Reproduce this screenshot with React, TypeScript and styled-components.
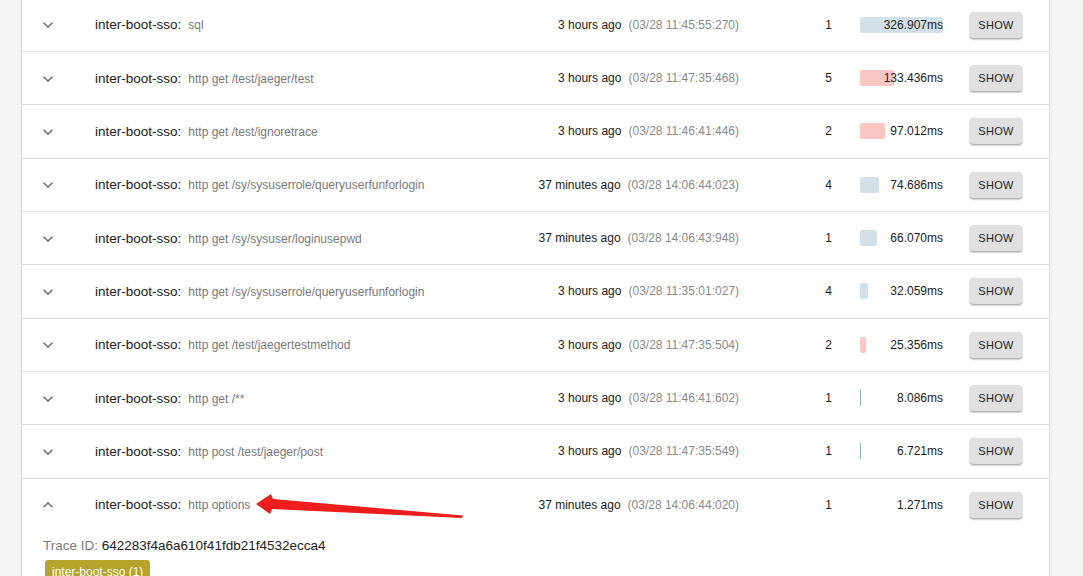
import React from "react";
import styled, { createGlobalStyle } from "styled-components";

const Global = createGlobalStyle`
  html, body { margin: 0; padding: 0; background: #f5f5f5; }
  body { font-family: "Liberation Sans", Arial, sans-serif; overflow: hidden; }
`;

const Page = styled.div`
  position: relative;
  width: 1083px;
  height: 576px;
  overflow: hidden;
  background: #f5f5f5;
`;

const Card = styled.div`
  margin: -1.33px 0 0 22px;
  width: 1027px;
  background: #fff;
  box-shadow: 0 1px 3px rgba(0, 0, 0, 0.2), 0 1px 1px rgba(0, 0, 0, 0.14);
`;

const Row = styled.div<{ $last?: boolean }>`
  border-bottom: ${(p) => (p.$last ? "none" : "1px solid #e0e0e0")};
`;

const RowHead = styled.div`
  box-sizing: border-box;
  height: 52.33px;
  display: grid;
  grid-template-columns: 73px 1fr 260px 121px 83px 79px;
  align-items: center;
  padding-right: 27px;
`;

const IconCell = styled.div`
  display: flex;
  align-items: center;
  padding-left: 16px;
  padding-top: 1px;
`;

const Title = styled.div`
  display: flex;
  align-items: baseline;
  white-space: nowrap;
`;

const Service = styled.span`
  font-size: 13.5px;
  color: #212121;
`;

const Operation = styled.span`
  font-size: 12px;
  color: #7a7a7a;
  margin-left: 7px;
`;

const Time = styled.div`
  display: flex;
  justify-content: flex-end;
  align-items: baseline;
  white-space: nowrap;
  font-size: 12px;
  color: #212121;
`;

const Stamp = styled.span`
  color: #8a8a8a;
  margin-left: 7px;
`;

const Count = styled.div`
  text-align: right;
  padding-right: 28px;
  font-size: 12px;
  color: #212121;
`;

const BarCell = styled.div`
  position: relative;
  height: 16px;
  display: flex;
  align-items: center;
  justify-content: flex-end;
`;

const Bar = styled.div<{ $err?: boolean }>`
  position: absolute;
  left: 0;
  top: 0;
  height: 16px;
  border-radius: 2px;
  background: ${(p) => (p.$err ? "#fbc6c4" : "#d2e0e8")};
`;

const Thin = styled.div`
  position: absolute;
  left: 0;
  top: 0;
  height: 16px;
  width: 1px;
  background: #8fb4c8;
`;

const Duration = styled.span`
  position: relative;
  font-size: 12px;
  color: #212121;
`;

const ShowButton = styled.button`
  justify-self: end;
  margin: 0;
  width: 52px;
  height: 26px;
  border: none;
  border-radius: 3px;
  background: #e0e0e0;
  box-shadow: 0 1px 2px rgba(0, 0, 0, 0.3), 0 2px 2px rgba(0, 0, 0, 0.1);
  font-family: "Liberation Sans", Arial, sans-serif;
  font-size: 11px;
  letter-spacing: 0.3px;
  color: #212121;
  padding: 0;
`;

const Details = styled.div`
  padding: 2px 21px 0 21px;
`;

const TraceLine = styled.div`
  font-size: 13.5px;
  color: #7a7a7a;
  line-height: 26px;
`;

const TraceId = styled.span`
  color: #212121;
`;

const Badge = styled.span`
  display: inline-block;
  margin: 1px 0 0 2px;
  padding: 5px 7px 5px;
  border-radius: 3px;
  background: #b4a42c;
  color: #fff;
  font-size: 12px;
  line-height: 14px;
`;

const Annotation = styled.svg`
  position: absolute;
  left: 0;
  top: 0;
  pointer-events: none;
`;

const Chevron = ({ up }: { up?: boolean }) => (
  <svg width="20" height="20" viewBox="0 0 24 24" fill="#757575">
    {up ? (
      <path d="M12 8l-6 6 1.41 1.41L12 10.83l4.59 4.58L18 14z" />
    ) : (
      <path d="M16.59 8.59L12 13.17 7.41 8.59 6 10l6 6 6-6z" />
    )}
  </svg>
);

type Trace = {
  op: string;
  ago: string;
  stamp: string;
  spans: number;
  ms: number;
  err?: boolean;
};

const traces: Trace[] = [
  { op: "sql", ago: "3 hours ago", stamp: "03/28 11:45:55:270", spans: 1, ms: 326.907 },
  { op: "http get /test/jaeger/test", ago: "3 hours ago", stamp: "03/28 11:47:35:468", spans: 5, ms: 133.436, err: true },
  { op: "http get /test/ignoretrace", ago: "3 hours ago", stamp: "03/28 11:46:41:446", spans: 2, ms: 97.012, err: true },
  { op: "http get /sy/sysuserrole/queryuserfunforlogin", ago: "37 minutes ago", stamp: "03/28 14:06:44:023", spans: 4, ms: 74.686 },
  { op: "http get /sy/sysuser/loginusepwd", ago: "37 minutes ago", stamp: "03/28 14:06:43:948", spans: 1, ms: 66.07 },
  { op: "http get /sy/sysuserrole/queryuserfunforlogin", ago: "3 hours ago", stamp: "03/28 11:35:01:027", spans: 4, ms: 32.059 },
  { op: "http get /test/jaegertestmethod", ago: "3 hours ago", stamp: "03/28 11:47:35:504", spans: 2, ms: 25.356, err: true },
  { op: "http get /**", ago: "3 hours ago", stamp: "03/28 11:46:41:602", spans: 1, ms: 8.086 },
  { op: "http post /test/jaeger/post", ago: "3 hours ago", stamp: "03/28 11:47:35:549", spans: 1, ms: 6.721 },
  { op: "http options", ago: "37 minutes ago", stamp: "03/28 14:06:44:020", spans: 1, ms: 1.271 },
];

const MAX = 326.907;
const BAR_W = 83;

const fmt = (ms: number) => ms.toFixed(3) + "ms";

export default function App() {
  return (
    <Page>
      <Global />
      <Card>
        {traces.map((t, i) => {
          const expanded = i === traces.length - 1;
          const w = Math.round((t.ms / MAX) * BAR_W);
          return (
            <Row key={i} $last={expanded}>
              <RowHead>
                <IconCell>
                  <Chevron up={expanded} />
                </IconCell>
                <Title>
                  <Service>inter-boot-sso:</Service>
                  <Operation>{t.op}</Operation>
                </Title>
                <Time>
                  {t.ago}
                  <Stamp>({t.stamp})</Stamp>
                </Time>
                <Count>{t.spans}</Count>
                <BarCell>
                  {w >= 3 ? (
                    <Bar $err={t.err} style={{ width: w }} />
                  ) : w >= 1 ? (
                    <Thin />
                  ) : null}
                  <Duration>{fmt(t.ms)}</Duration>
                </BarCell>
                <ShowButton>SHOW</ShowButton>
              </RowHead>
              {expanded && (
                <Details>
                  <TraceLine>
                    Trace ID: <TraceId>642283f4a6a610f41fdb21f4532ecca4</TraceId>
                  </TraceLine>
                  <Badge>inter-boot-sso (1)</Badge>
                </Details>
              )}
            </Row>
          );
        })}
      </Card>
      <Annotation width="1083" height="576" viewBox="0 0 1083 576">
        <polygon
          points="256,504 271,494 273,499 463,515.5 462,518 272,509 270,514"
          fill="#f01d1d"
        />
      </Annotation>
    </Page>
  );
}
